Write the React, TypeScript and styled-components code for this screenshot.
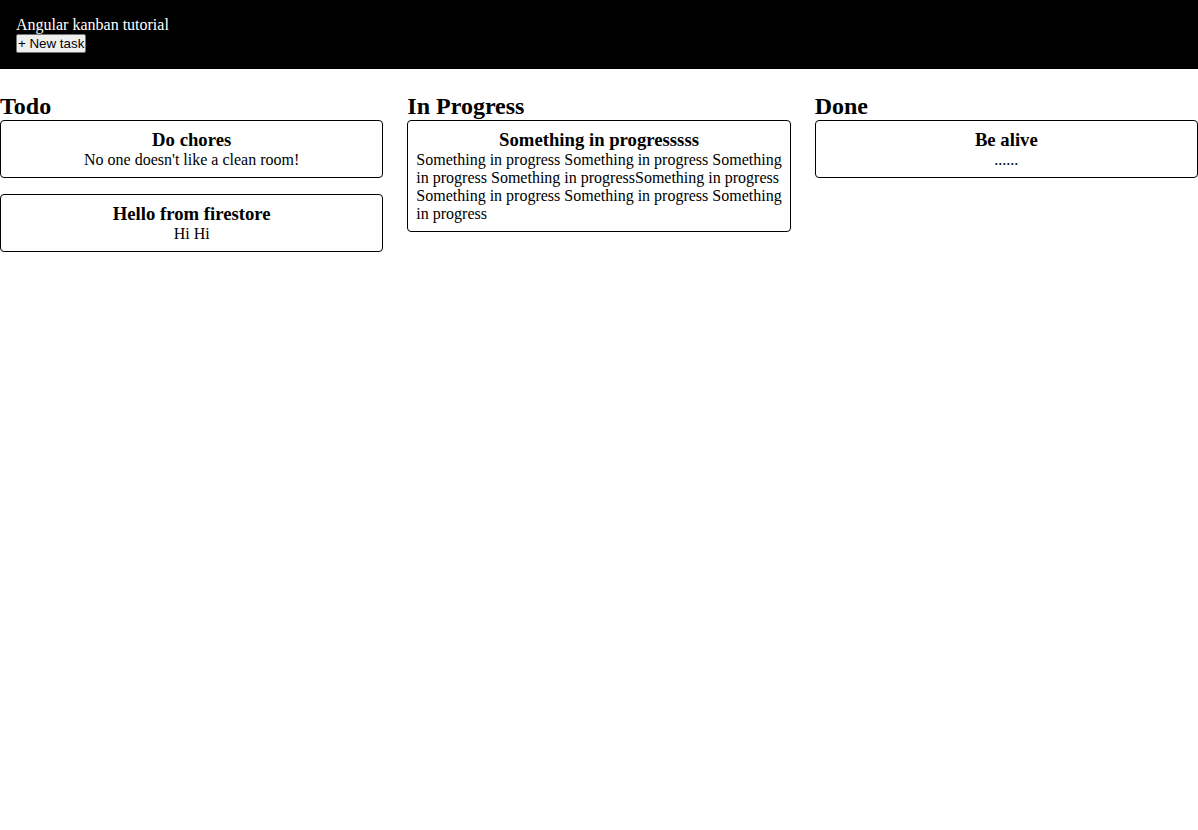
import React from 'react'
import styled, { createGlobalStyle } from 'styled-components'

const GlobalStyle = createGlobalStyle`
  body {
    margin: 0;
    font-family: 'Liberation Serif', 'Times New Roman', serif;
    color: #000;
    background: #fff;
  }
`

const Toolbar = styled.header`
  background: #000;
  color: #fff;
  padding: 16px 16px 16px 16px;
  font-size: 16px;
  line-height: normal;
`

const Title = styled.div`
  font-family: 'Liberation Serif', serif;
`

const NewTaskButton = styled.button`
  display: block;
  font-family: 'Liberation Sans', Arial, sans-serif;
  font-size: 13.33px;
  padding: 1px 1px;
  margin: 0;
  color: #000;
  background: #efefef;
  border: 1px solid #767676;
  border-radius: 2px;
  cursor: pointer;
`

const Board = styled.main`
  display: grid;
  grid-template-columns: repeat(3, 1fr);
  column-gap: 24px;
  padding-top: 24px;
  align-items: start;
`

const Column = styled.section`
  display: flex;
  flex-direction: column;
`

const ColumnTitle = styled.h2`
  font-size: 24px;
  font-weight: bold;
  margin: 0;
  line-height: normal;
`

const CardList = styled.div`
  display: flex;
  flex-direction: column;
  gap: 16px;
`

const Card = styled.div`
  border: 1px solid #000;
  border-radius: 4px;
  padding: 8px;
`

const CardTitle = styled.h3`
  margin: 0;
  font-size: 18.72px;
  font-weight: bold;
  text-align: center;
  line-height: normal;
`

const CardText = styled.p<{ $center?: boolean }>`
  margin: 0;
  font-size: 16px;
  line-height: 18px;
  text-align: ${p => (p.$center ? 'center' : 'left')};
`

interface Task {
  title: string
  description: string
}

const columns: { name: string; tasks: Task[] }[] = [
  {
    name: 'Todo',
    tasks: [
      { title: 'Do chores', description: "No one doesn't like a clean room!" },
      { title: 'Hello from firestore', description: 'Hi Hi' },
    ],
  },
  {
    name: 'In Progress',
    tasks: [
      {
        title: 'Something in progresssss',
        description:
          'Something in progress Something in progress Something in progress Something in progressSomething in progress Something in progress Something in progress Something in progress',
      },
    ],
  },
  {
    name: 'Done',
    tasks: [{ title: 'Be alive', description: '......' }],
  },
]

const App: React.FunctionComponent = () => {
  return (
    <>
      <GlobalStyle />
      <Toolbar>
        <Title>Angular kanban tutorial</Title>
        <NewTaskButton>+ New task</NewTaskButton>
      </Toolbar>
      <Board>
        {columns.map(col => (
          <Column key={col.name}>
            <ColumnTitle>{col.name}</ColumnTitle>
            <CardList>
              {col.tasks.map(task => (
                <Card key={task.title}>
                  <CardTitle>{task.title}</CardTitle>
                  <CardText $center={task.description.length < 60}>{task.description}</CardText>
                </Card>
              ))}
            </CardList>
          </Column>
        ))}
      </Board>
    </>
  )
}

export default App
